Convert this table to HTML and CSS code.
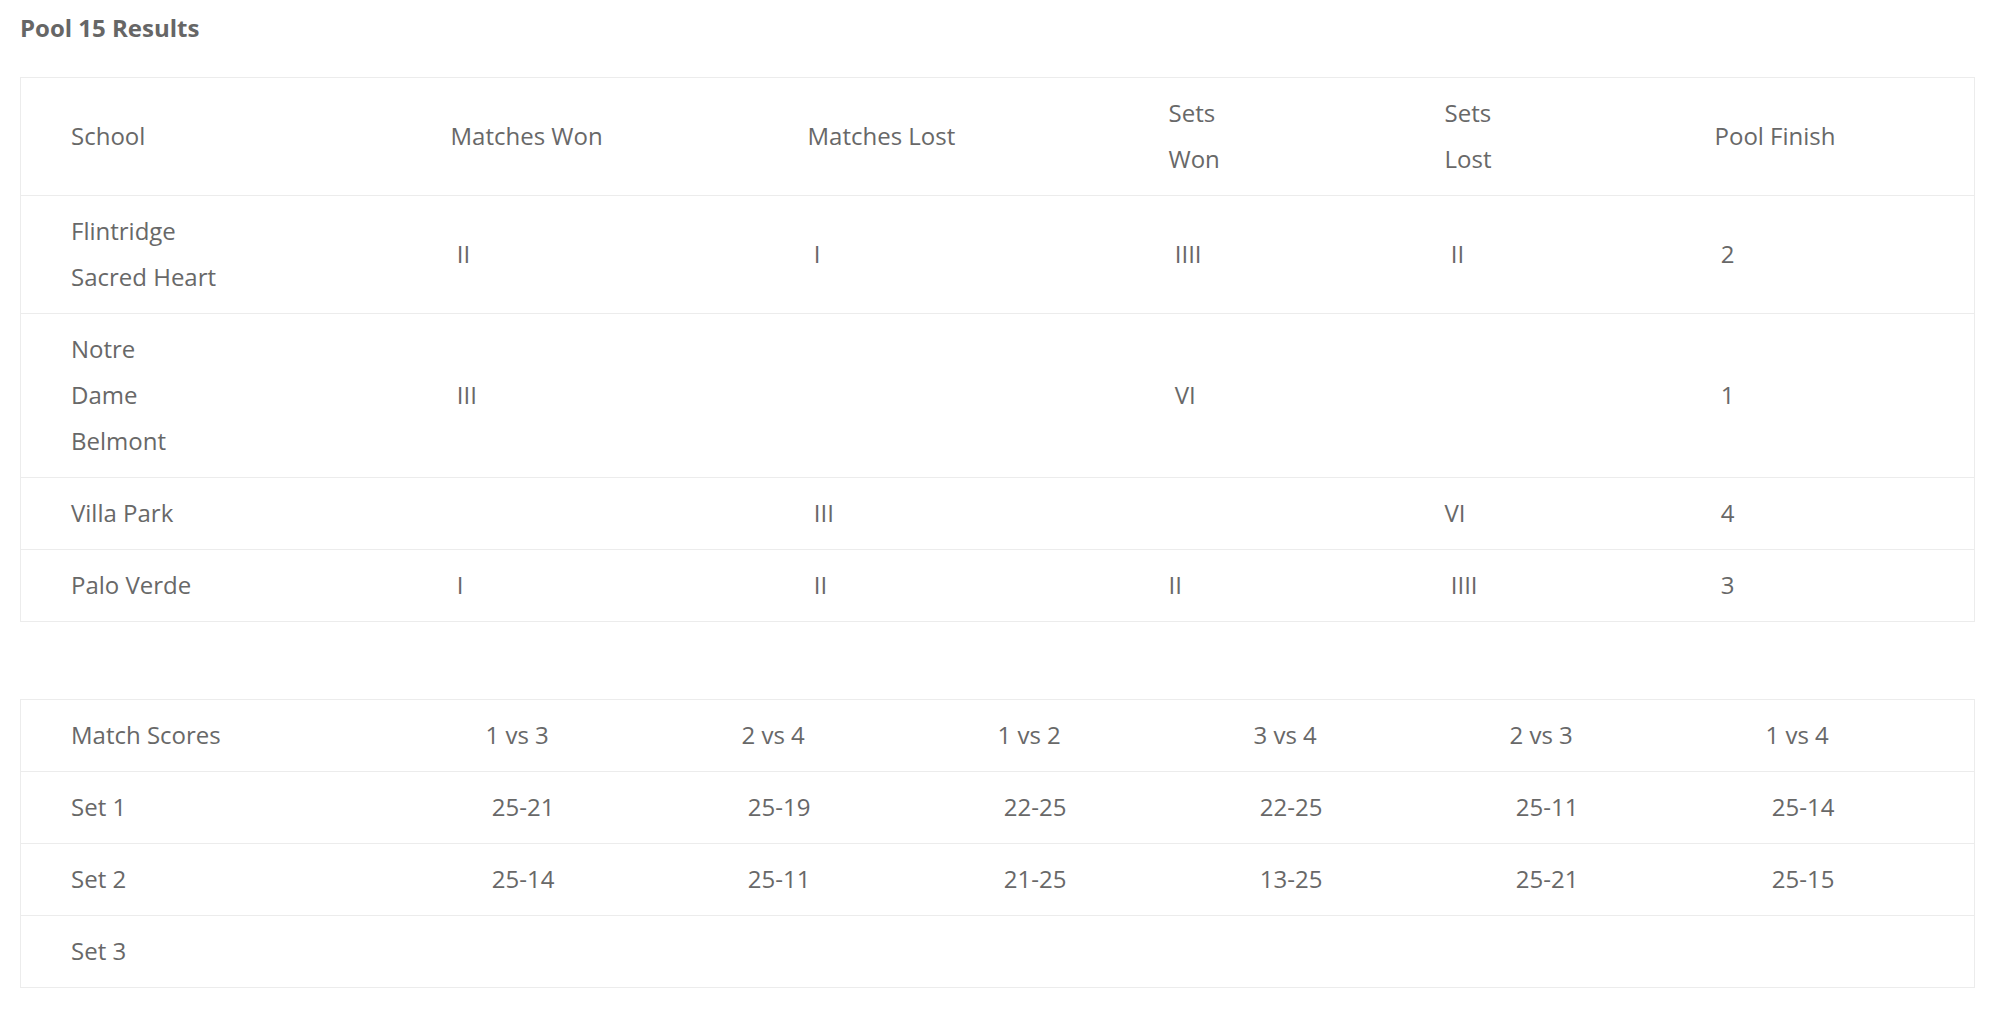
FILE: index.html
```html
<!DOCTYPE html>
<html lang="en">
<head>
    <meta charset="UTF-8">
    <meta name="viewport" content="width=device-width, initial-scale=1.0">
    <title>Pool 15 Results</title>
    <link rel="stylesheet" href="styles.css">
</head>
<body>
    <div class="results-container">
        <h2 class="pool-title">Pool 15 Results</h2>

        <table class="results-table standings">
            <colgroup>
                <col class="col-school">
                <col class="col-won">
                <col class="col-lost">
                <col class="col-sets-won">
                <col class="col-sets-lost">
                <col class="col-finish">
            </colgroup>
            <tr>
                <th>School</th>
                <th>Matches Won</th>
                <th>Matches Lost</th>
                <th>Sets<br>Won</th>
                <th>Sets<br>Lost</th>
                <th>Pool Finish</th>
            </tr>
            <tr>
                <td>Flintridge<br>Sacred Heart</td>
                <td>&nbsp;II</td>
                <td>&nbsp;I</td>
                <td>&nbsp;IIII</td>
                <td>&nbsp;II</td>
                <td>&nbsp;2</td>
            </tr>
            <tr>
                <td>Notre<br>Dame<br>Belmont</td>
                <td>&nbsp;III</td>
                <td></td>
                <td>&nbsp;VI</td>
                <td></td>
                <td>&nbsp;1</td>
            </tr>
            <tr>
                <td>Villa Park</td>
                <td></td>
                <td>&nbsp;III</td>
                <td></td>
                <td>VI</td>
                <td>&nbsp;4</td>
            </tr>
            <tr>
                <td>Palo Verde</td>
                <td>&nbsp;I</td>
                <td>&nbsp;II</td>
                <td>II</td>
                <td>&nbsp;IIII</td>
                <td>&nbsp;3</td>
            </tr>
        </table>

        <table class="results-table scores">
            <colgroup>
                <col class="col-label">
                <col class="col-score">
                <col class="col-score">
                <col class="col-score">
                <col class="col-score">
                <col class="col-score">
                <col class="col-score-last">
            </colgroup>
            <tr>
                <th>Match Scores</th>
                <th>1 vs 3</th>
                <th>2 vs 4</th>
                <th>1 vs 2</th>
                <th>3 vs 4</th>
                <th>2 vs 3</th>
                <th>1 vs 4</th>
            </tr>
            <tr>
                <td>Set 1</td>
                <td>&nbsp;25-21</td>
                <td>&nbsp;25-19</td>
                <td>&nbsp;22-25</td>
                <td>&nbsp;22-25</td>
                <td>&nbsp;25-11</td>
                <td>&nbsp;25-14</td>
            </tr>
            <tr>
                <td>Set 2</td>
                <td>&nbsp;25-14</td>
                <td>&nbsp;25-11</td>
                <td>&nbsp;21-25</td>
                <td>&nbsp;13-25</td>
                <td>&nbsp;25-21</td>
                <td>&nbsp;25-15</td>
            </tr>
            <tr>
                <td>Set 3</td>
                <td></td>
                <td></td>
                <td></td>
                <td></td>
                <td></td>
                <td></td>
            </tr>
        </table>
    </div>
</body>
</html>
```

FILE: styles.css
```css
body {
    font-family: 'Open Sans', 'Noto Sans', sans-serif;
    background-color: #ffffff;
    color: #686868;
    margin: 0;
}

.results-container {
    padding: 11px 28px 0 20px;
}

.pool-title {
    margin: 0 0 33px;
    font-size: 24px;
    font-weight: 700;
    line-height: 33px;
    color: #666666;
}

.results-table {
    width: 100%;
    table-layout: fixed;
    border-collapse: collapse;
    border: 1px solid #ececec;
    font-size: 24px;
    line-height: 46px;
}

.results-table th,
.results-table td {
    font-weight: 400;
    text-align: left;
    vertical-align: middle;
    padding: 12px 0 13px 50px;
    border-top: 1px solid #ececec;
    white-space: nowrap;
}

.scores {
    margin-top: 77px;
}

.col-school { width: 380px; }
.col-won { width: 357px; }
.col-lost { width: 361px; }
.col-sets-won { width: 276px; }
.col-sets-lost { width: 270px; }
.col-finish { width: 310px; }

.col-label { width: 415px; }
.col-score { width: 256px; }
.col-score-last { width: 259px; }
```
